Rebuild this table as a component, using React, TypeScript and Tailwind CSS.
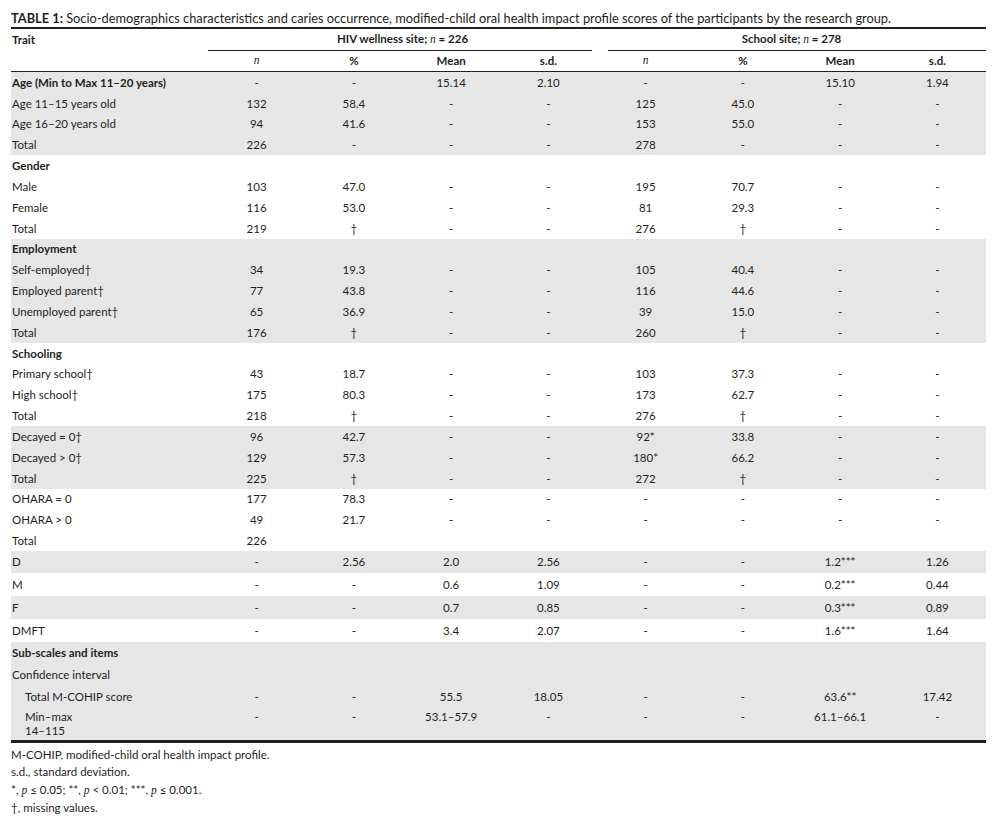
import React from "react";

type Row = {
  label: React.ReactNode;
  cells?: string[];
  bold?: boolean;
  gray?: boolean;
  h: string;
  indent?: boolean;
};

const d = "-";
const H = "h-[20.83px]";

const rows: Row[] = [
  { label: "Age (Min to Max 11–20 years)", bold: true, gray: true, h: H, cells: [d, d, "15.14", "2.10", d, d, "15.10", "1.94"] },
  { label: "Age 11–15 years old", gray: true, h: H, cells: ["132", "58.4", d, d, "125", "45.0", d, d] },
  { label: "Age 16–20 years old", gray: true, h: H, cells: ["94", "41.6", d, d, "153", "55.0", d, d] },
  { label: "Total", gray: true, h: H, cells: ["226", d, d, d, "278", d, d, d] },
  { label: "Gender", bold: true, h: H },
  { label: "Male", h: H, cells: ["103", "47.0", d, d, "195", "70.7", d, d] },
  { label: "Female", h: H, cells: ["116", "53.0", d, d, "81", "29.3", d, d] },
  { label: "Total", h: H, cells: ["219", "†", d, d, "276", "†", d, d] },
  { label: "Employment", bold: true, gray: true, h: H },
  { label: "Self-employed†", gray: true, h: H, cells: ["34", "19.3", d, d, "105", "40.4", d, d] },
  { label: "Employed parent†", gray: true, h: H, cells: ["77", "43.8", d, d, "116", "44.6", d, d] },
  { label: "Unemployed parent†", gray: true, h: H, cells: ["65", "36.9", d, d, "39", "15.0", d, d] },
  { label: "Total", gray: true, h: H, cells: ["176", "†", d, d, "260", "†", d, d] },
  { label: "Schooling", bold: true, h: H },
  { label: "Primary school†", h: H, cells: ["43", "18.7", d, d, "103", "37.3", d, d] },
  { label: "High school†", h: H, cells: ["175", "80.3", d, d, "173", "62.7", d, d] },
  { label: "Total", h: H, cells: ["218", "†", d, d, "276", "†", d, d] },
  { label: "Decayed = 0†", gray: true, h: H, cells: ["96", "42.7", d, d, "92*", "33.8", d, d] },
  { label: "Decayed > 0†", gray: true, h: H, cells: ["129", "57.3", d, d, "180*", "66.2", d, d] },
  { label: "Total", gray: true, h: H, cells: ["225", "†", d, d, "272", "†", d, d] },
  { label: "OHARA = 0", h: H, cells: ["177", "78.3", d, d, d, d, d, d] },
  { label: "OHARA > 0", h: H, cells: ["49", "21.7", d, d, d, d, d, d] },
  { label: "Total", h: H, cells: ["226", "", "", "", "", "", "", ""] },
  { label: "D", gray: true, h: "h-[22px]", cells: [d, "2.56", "2.0", "2.56", d, d, "1.2***", "1.26"] },
  { label: "M", h: "h-[23px]", cells: [d, d, "0.6", "1.09", d, d, "0.2***", "0.44"] },
  { label: "F", gray: true, h: "h-[23px]", cells: [d, d, "0.7", "0.85", d, d, "0.3***", "0.89"] },
  { label: "DMFT", h: "h-[23px]", cells: [d, d, "3.4", "2.07", d, d, "1.6***", "1.64"] },
  { label: "Sub-scales and items", bold: true, gray: true, h: "h-[22px]" },
  { label: "Confidence interval", gray: true, h: "h-[22px]" },
  { label: "Total M-COHIP score", gray: true, indent: true, h: "h-[21px]", cells: [d, d, "55.5", "18.05", d, d, "63.6**", "17.42"] },
];

const N = () => (
  <span className="italic font-normal" style={{ fontFamily: '"Liberation Serif", "DejaVu Serif", serif' }}>n</span>
);
const P = () => (
  <span className="italic" style={{ fontFamily: '"Liberation Serif", "DejaVu Serif", serif' }}>p</span>
);

const grid = "grid grid-cols-[197px_repeat(8,minmax(0,1fr))]";

export default function App() {
  return (
    <div className="w-[1008px] h-[822px] bg-white text-[#231f20] text-[11.5px]" style={{ fontFamily: "Lato, 'Open Sans', sans-serif" }}>
      <div className="ml-[11px] w-[975px] pt-[10px]">
        <div className="h-[17px] leading-[17px] text-[12.8px] border-b-2 border-[#231f20] box-content whitespace-nowrap">
          <span className="font-bold">TABLE 1:</span> Socio-demographics characteristics and caries occurrence, modified-child oral health impact profile scores of the participants by the research group.
        </div>
        {/* header row 1 */}
        <div className={`${grid} h-[22px] font-bold`}>
          <div className="flex items-center pl-[1px]">Trait</div>
          <div className="col-span-4 mr-[5px] border-b border-[#231f20] flex items-center justify-center pl-[5px]">
            <span>HIV wellness site; <N /> = 226</span>
          </div>
          <div className="col-span-4 ml-[11px] border-b border-[#231f20] flex items-center justify-center pr-[11px]">
            <span>School site; <N /> = 278</span>
          </div>
        </div>
        {/* header row 2 */}
        <div className={`${grid} h-[21px] font-bold border-b border-[#231f20] box-border`}>
          <div />
          {["n", "%", "Mean", "s.d.", "n", "%", "Mean", "s.d."].map((t, i) => (
            <div key={i} className="flex items-center justify-center">
              {t === "n" ? <N /> : t}
            </div>
          ))}
        </div>
        {rows.map((r, i) => (
          <div key={i} className={`${grid} ${r.h} ${r.gray ? "bg-[#e6e6e6]" : ""}`}>
            <div className={`flex items-center ${r.indent ? "pl-[14px]" : "pl-[1px]"} ${r.bold ? "font-bold" : ""} whitespace-nowrap`}>
              {r.label}
            </div>
            {(r.cells ?? ["", "", "", "", "", "", "", ""]).map((c, j) => (
              <div key={j} className="flex items-center justify-center whitespace-nowrap">
                {c}
              </div>
            ))}
          </div>
        ))}
        {/* min-max row */}
        <div className={`${grid} h-[36px] bg-[#e6e6e6] border-b-[3px] border-[#231f20] pt-[3px] leading-[14px]`}>
          <div className="pl-[14px] flex flex-col">
            <span>Min–max</span>
            <span>14–115</span>
          </div>
          {[d, d, "53.1–57.9", d, d, d, "61.1–66.1", d].map((c, j) => (
            <div key={j} className="text-center whitespace-nowrap">{c}</div>
          ))}
        </div>
        <div className="pt-[3px] leading-[17.3px]">
          <div>M-COHIP, modified-child oral health impact profile.</div>
          <div>s.d., standard deviation.</div>
          <div>
            *, <P /> ≤ 0.05; **, <P /> &lt; 0.01; ***, <P /> ≤ 0.001.
          </div>
          <div>†, missing values.</div>
        </div>
      </div>
    </div>
  );
}
